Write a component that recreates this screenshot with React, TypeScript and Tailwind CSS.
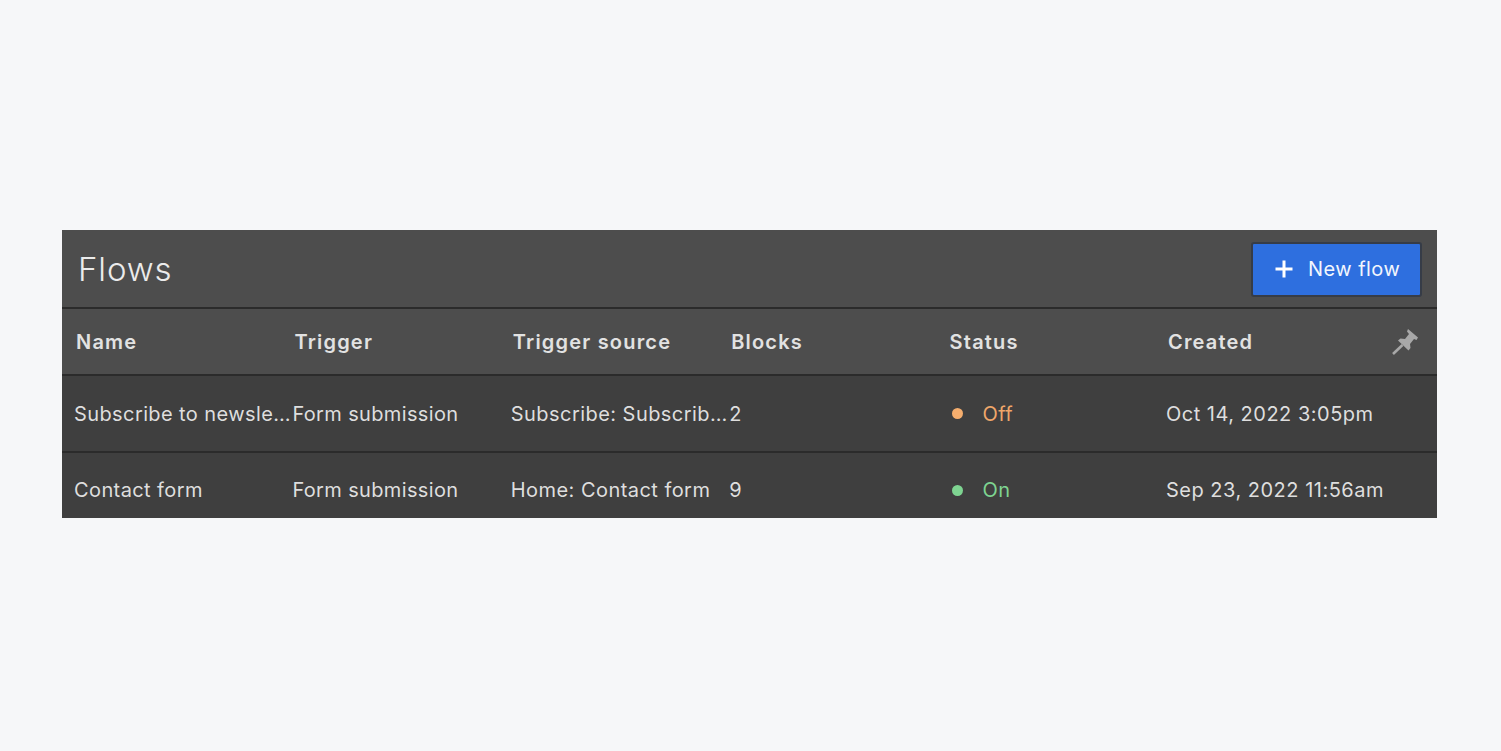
const columns = ["Name", "Trigger", "Trigger source", "Blocks", "Status", "Created"];

const flows = [
	{
		name: "Subscribe to newsletter",
		trigger: "Form submission",
		source: "Subscribe: Subscribe form",
		blocks: "2",
		on: false,
		created: "Oct 14, 2022 3:05pm",
	},
	{
		name: "Contact form",
		trigger: "Form submission",
		source: "Home: Contact form",
		blocks: "9",
		on: true,
		created: "Sep 23, 2022 11:56am",
	},
];

function PinIcon() {
	return (
		<svg width="30" height="30" viewBox="0 0 30 30" fill="none">
			<path d="M18 2 L28 10.5 L26.5 13 L24 12 L20 17 L20.5 21 L18.5 23.5 L8 13.5 L10.5 11.5 L15 12 L19 7 L17 4.5 Z" fill="#a8a8a8" />
			<path d="M12.5 18 L3 27" stroke="#a8a8a8" strokeWidth="2.6" />
		</svg>
	);
}

export default function App() {
	return (
		<div className="flex h-[751px] items-start bg-[#f6f7f9] pl-[62px] pt-[230px] font-['Inter',sans-serif]">
			<div className="w-[1375px] bg-[#3f3f3f]">
				{/* Title bar */}
				<div className="flex h-[79px] items-start justify-between border-b-2 border-[#2b2b2b] bg-[#4d4d4d] pl-4 pr-[15px]">
					<h1 className="mt-[19px] text-[33px] leading-10 font-light tracking-[0.9px] text-[#ebebeb]">Flows</h1>
					<button className="mt-3 flex h-[55px] w-[171px] items-center gap-[14px] rounded-[3px] border-2 border-[#363c47] bg-[#2e6fdf] pb-[2px] pl-[21px] text-[20px] font-normal tracking-[0.45px] text-[#f2f6fd]">
						<svg width="20" height="20" viewBox="0 0 20 20">
							<path d="M10 1.5v17M1.5 10h17" stroke="#ffffff" strokeWidth="3" />
						</svg>
						New flow
					</button>
				</div>

				{/* Column headers */}
				<div className="relative flex h-[67px] items-center border-b-2 border-[#2b2b2b] bg-[#4d4d4d] pl-[14px]">
					{columns.map((col) => (
						<div key={col} className="w-[218.4px] shrink-0 text-[20px] font-semibold tracking-[1.2px] text-[#e2e2e2]">
							{col}
						</div>
					))}
					<div className="absolute right-[17px] top-[18px]">
						<PinIcon />
					</div>
				</div>

				{/* Rows */}
				{flows.map((flow, i) => (
					<div
						key={flow.name}
						className={
							i === 0
								? "flex h-[77px] items-center border-b-2 border-[#2b2b2b] pl-3 text-[20px] tracking-[0.35px] text-[#dedede]"
								: "flex h-[65px] items-center pl-3 pt-[9px] text-[20px] tracking-[0.35px] text-[#dedede]"
						}
					>
						<div className="w-[218.4px] shrink-0 truncate tracking-[0.4px]">{flow.name}</div>
						<div className="w-[218.4px] shrink-0 truncate">{flow.trigger}</div>
						<div className="w-[218.4px] shrink-0 truncate tracking-[0.45px]">{flow.source}</div>
						<div className="w-[218.4px] shrink-0">{flow.blocks}</div>
						<div className="flex w-[218.4px] shrink-0 items-center pl-[4px]">
							{flow.on ? (
								<span className="h-[11px] w-[11px] rounded-full bg-[#7ed491]" />
							) : (
								<span className="h-[11px] w-[11px] rounded-full bg-[#f5ae6e]" />
							)}
							<span className={flow.on ? "ml-5 text-[#7ed491]" : "ml-5 text-[#f0a76a]"}>{flow.on ? "On" : "Off"}</span>
						</div>
						<div className="whitespace-nowrap tracking-[0.5px]">{flow.created}</div>
					</div>
				))}
			</div>
		</div>
	);
}
